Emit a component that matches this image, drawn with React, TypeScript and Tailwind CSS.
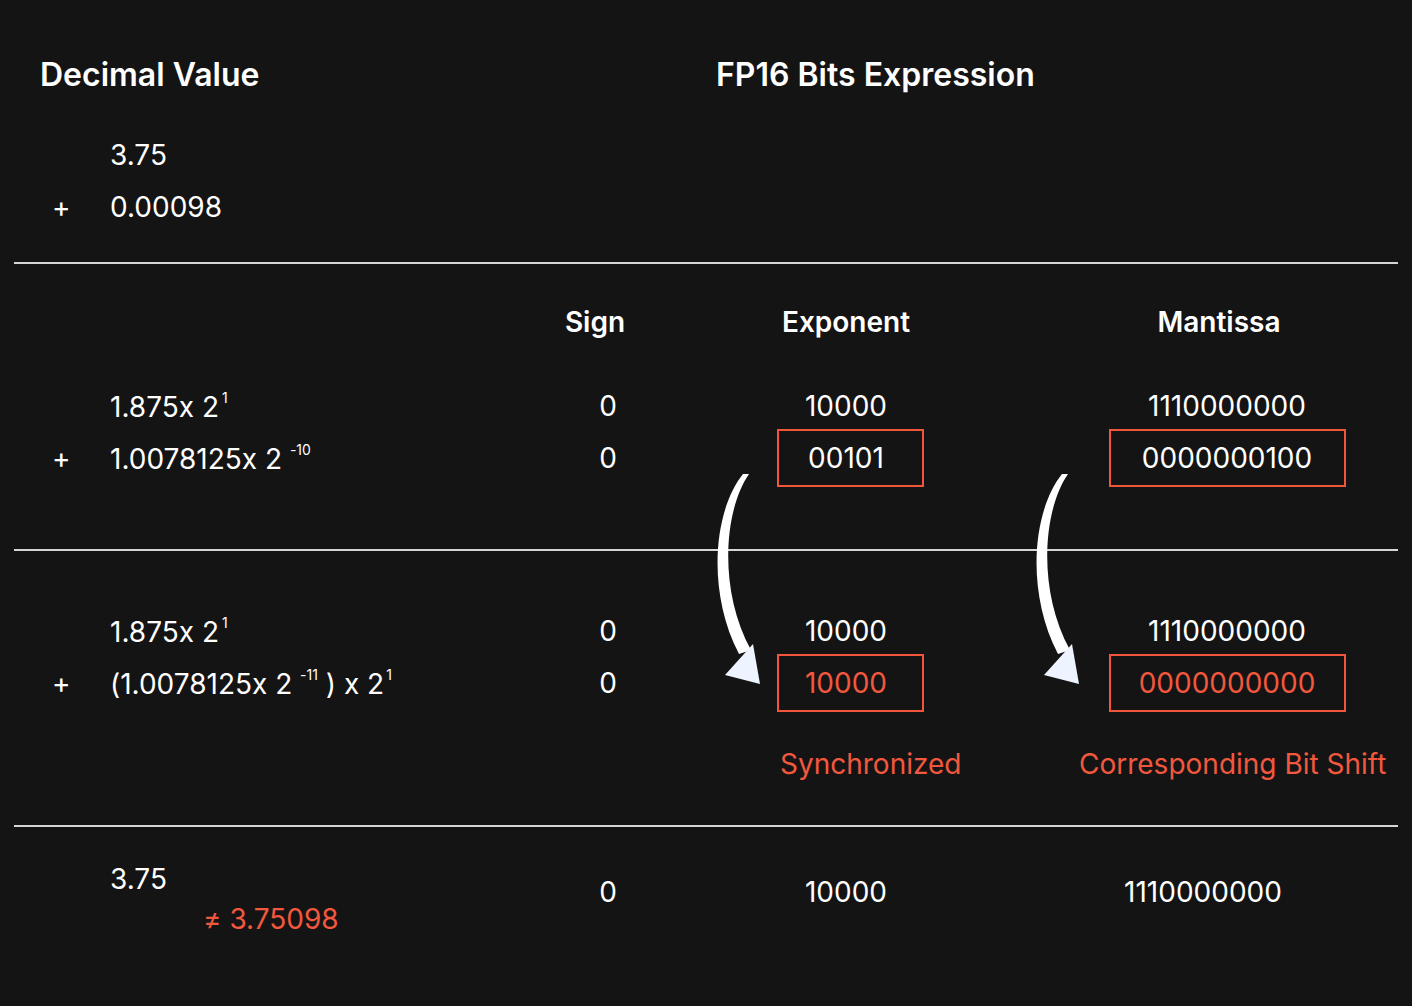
import type { ReactNode } from "react";

const font = { fontFamily: "Inter, 'Noto Sans', sans-serif" };

function Sup({ children, className = "" }: { children: ReactNode; className?: string }) {
  return <span className={"align-[14px] text-[14px] leading-none " + className}>{children}</span>;
}

function Box({ children, red = false }: { children: ReactNode; red?: boolean }) {
  return (
    <div
      className={
        "flex h-[58px] shrink-0 items-center justify-center border-2 border-[#f0563c] " +
        (red ? "text-[#f2583e]" : "text-white")
      }
    >
      {children}
    </div>
  );
}

function Row({
  plus,
  left,
  sign,
  exp,
  man,
}: {
  plus?: boolean;
  left: ReactNode;
  sign?: ReactNode;
  exp?: ReactNode;
  man?: ReactNode;
}) {
  return (
    <div className="flex h-[52px] items-center">
      <div className="flex w-[560px] items-center pl-[52px]">
        <span className="w-[58px]">{plus ? "+" : ""}</span>
        <span className="whitespace-nowrap">{left}</span>
      </div>
      <div className="flex w-[96px] justify-center">{sign}</div>
      <div className="flex w-[380px] justify-center">{exp}</div>
      <div className="flex flex-1 justify-center pl-[6px]">{man}</div>
    </div>
  );
}

function Line() {
  return <div className="mx-[14px] h-[2px] bg-[#d6d6d6]" />;
}

function Arrow({ className }: { className: string }) {
  return (
    <svg className={"absolute " + className} width="50" height="220" viewBox="0 0 50 220">
      <path d="M29 4 C0 40, -8 120, 25 184 L37 180 C4 120, 10 40, 35 4 Z" fill="#ffffff" />
      <polygon points="11,205 39,174 46,214" fill="#eef4ff" />
    </svg>
  );
}

export default function App() {
  return (
    <div
      className="relative h-[1006px] w-full overflow-hidden bg-[#141414] text-[28px] leading-none text-white [font-feature-settings:'calt'_0]"
      style={font}
    >
      {/* header */}
      <div className="flex pt-[56px] text-[32px] font-semibold leading-[38px]">
        <div className="w-[716px] pl-[40px]">Decimal Value</div>
        <div>FP16 Bits Expression</div>
      </div>

      <div className="mt-[35px]">
        <Row left="3.75" />
        <Row plus left="0.00098" />
      </div>

      <div className="mt-[29px]">
        <Line />
      </div>

      {/* bit layout */}
      <div className="mt-[40px] flex text-[28px] font-semibold leading-[36px]">
        <div className="w-[560px]" />
        <div className="flex w-[96px] justify-center pr-[26px]">Sign</div>
        <div className="flex w-[380px] justify-center">Exponent</div>
        <div className="flex flex-1 justify-center pr-[10px]">Mantissa</div>
      </div>

      <div className="mt-[40px]">
        <Row
          left={
            <>
              1.875x 2<Sup className="ml-[3px]">1</Sup>
            </>
          }
          sign="0"
          exp="10000"
          man="1110000000"
        />
        <Row
          plus
          left={
            <>
              1.0078125x 2 <Sup>-10</Sup>
            </>
          }
          sign="0"
          exp={
            <div className="ml-[9px] w-[147px]">
              <Box>
                <span className="pr-[9px]">00101</span>
              </Box>
            </div>
          }
          man={
            <div className="w-[237px]">
              <Box>0000000100</Box>
            </div>
          }
        />
      </div>

      <div className="mt-[65px]">
        <Line />
      </div>

      {/* shifted */}
      <div className="mt-[54px]">
        <Row
          left={
            <>
              1.875x 2<Sup className="ml-[3px]">1</Sup>
            </>
          }
          sign="0"
          exp="10000"
          man="1110000000"
        />
        <Row
          plus
          left={
            <>
              (1.0078125x 2 <Sup>-11</Sup> ) x 2<Sup className="ml-[2px]">1</Sup>
            </>
          }
          sign="0"
          exp={
            <div className="ml-[9px] w-[147px]">
              <Box red>
                <span className="pr-[9px]">10000</span>
              </Box>
            </div>
          }
          man={
            <div className="w-[237px]">
              <Box red>0000000000</Box>
            </div>
          }
        />
      </div>

      <div className="mt-[37px] flex leading-[36px] text-[#f2583e]">
        <div className="w-[780px]" />
        <div className="w-[299px]">Synchronized</div>
        <div>Corresponding Bit Shift</div>
      </div>

      <div className="mt-[43px]">
        <Line />
      </div>

      {/* result */}
      <div className="mt-[32px] flex">
        <div className="w-[560px] pl-[110px]">
          <div className="leading-[40px]">3.75</div>
          <div className="pl-[93px] leading-[40px] text-[#f2583e]">≠ 3.75098</div>
        </div>
        <div className="flex w-[96px] justify-center pt-[13px] leading-[40px]">0</div>
        <div className="flex w-[380px] justify-center pt-[13px] leading-[40px]">10000</div>
        <div className="flex flex-1 justify-center pr-[42px] pt-[13px] leading-[40px]">1110000000</div>
      </div>

      <Arrow className="left-[714px] top-[470px]" />
      <Arrow className="left-[1033px] top-[470px]" />
    </div>
  );
}
